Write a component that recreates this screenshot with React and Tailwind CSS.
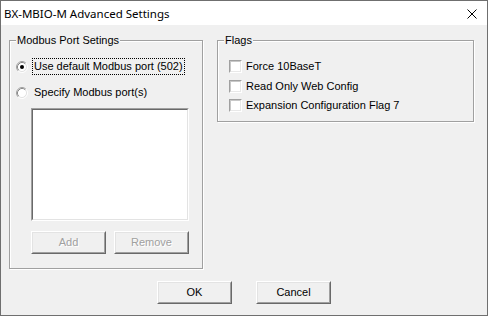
import React from "react";

function Radio({ checked }) {
  return (
    <svg width="12" height="12" viewBox="0 0 12 12" className="shrink-0">
      <circle cx="6" cy="6" r="4.5" fill="#ffffff" />
      <path d="M2.11 9.89 A5.5 5.5 0 0 1 9.89 2.11" stroke="#a0a0a0" fill="none" />
      <path d="M9.89 2.11 A5.5 5.5 0 0 1 2.11 9.89" stroke="#ffffff" fill="none" />
      <path d="M2.82 9.18 A4.5 4.5 0 0 1 9.18 2.82" stroke="#8a8a8a" fill="none" />
      <path d="M9.18 2.82 A4.5 4.5 0 0 1 2.82 9.18" stroke="#e3e3e3" fill="none" />
      {checked && <circle cx="6" cy="6" r="2" fill="#000000" />}
    </svg>
  );
}

function Check() {
  return (
    <div className="w-[13px] h-[13px] shrink-0 border border-t-[#a0a0a0] border-l-[#a0a0a0] border-r-white border-b-white">
      <div className="w-full h-full bg-white border border-t-[#c8c8c8] border-l-[#c8c8c8] border-r-[#e8e8e8] border-b-[#e8e8e8]" />
    </div>
  );
}

function Btn({ children, disabled }) {
  return (
    <div className="h-[23px] w-[75px] shrink-0 border border-t-white border-l-white border-r-[#696969] border-b-[#696969]">
      <div
        className={
          disabled
            ? "h-full w-full flex items-center justify-center bg-[#f0f0f0] border border-t-[#e3e3e3] border-l-[#e3e3e3] border-r-[#a0a0a0] border-b-[#a0a0a0] text-[#a0a0a0] [text-shadow:1px_1px_0_#ffffff]"
            : "h-full w-full flex items-center justify-center bg-[#f0f0f0] border border-t-[#e3e3e3] border-l-[#e3e3e3] border-r-[#a0a0a0] border-b-[#a0a0a0] text-black"
        }
      >
        {children}
      </div>
    </div>
  );
}

function Group({ label, className, children }) {
  return (
    <div
      className={
        "relative shrink-0 border border-[#a0a0a0] shadow-[inset_1px_1px_0_#ffffff,1px_1px_0_#ffffff] " +
        className
      }
    >
      <span className="absolute left-[6px] top-[-7px] px-[1px] bg-[#f0f0f0] leading-[13px]">
        {label}
      </span>
      {children}
    </div>
  );
}

export default function App() {
  return (
    <div className="w-[488px] h-[316px] border border-[#6f6f6f] flex flex-col bg-[#f0f0f0] font-['Liberation_Sans',Arial,sans-serif] text-[11px] text-black overflow-hidden">
      <div className="h-[24px] shrink-0 bg-white flex items-center justify-between pl-[3px] pr-[10px]">
        <span className="font-['Noto_Sans',sans-serif] text-[11.5px] leading-[16px] pt-[2px]">
          BX-MBIO-M Advanced Settings
        </span>
        <svg width="10" height="10" viewBox="0 0 10 10" className="mt-[2px]">
          <path d="M0.5 0.5 L9.5 9.5 M9.5 0.5 L0.5 9.5" stroke="#000000" strokeWidth="1" fill="none" />
        </svg>
      </div>
      <div className="flex-1 flex flex-col pt-[15px] pl-[8px]">
        <div className="flex gap-[14px] items-start">
          <Group label="Modbus Port Setings" className="w-[194px] h-[229px]">
            <div className="flex flex-col">
              <div className="flex items-center mt-[17px] ml-[6px] gap-[4px]">
                <Radio checked />
                <span className="border border-dotted border-black px-[1px] leading-[15px]">
                  Use default Modbus port (502)
                </span>
              </div>
              <div className="flex items-center mt-[9px] ml-[6px] gap-[4px]">
                <Radio />
                <span className="border border-transparent px-[1px] leading-[15px]">
                  Specify Modbus port(s)
                </span>
              </div>
              <div className="ml-[21px] mt-[7px] w-[158px] h-[113px] border border-t-[#a0a0a0] border-l-[#a0a0a0] border-r-white border-b-white">
                <div className="w-full h-full bg-white border border-t-[#696969] border-l-[#696969] border-r-[#e3e3e3] border-b-[#e3e3e3]" />
              </div>
              <div className="flex ml-[21px] mt-[10px] gap-[8px]">
                <Btn disabled>Add</Btn>
                <Btn disabled>Remove</Btn>
              </div>
            </div>
          </Group>
          <Group label="Flags" className="w-[257px] h-[82px]">
            <div className="flex flex-col ml-[11px]">
              <div className="flex items-center gap-[4px] mt-[19px] h-[13px]">
                <Check />
                <span>Force 10BaseT</span>
              </div>
              <div className="flex items-center gap-[4px] mt-[7px] h-[13px]">
                <Check />
                <span>Read Only Web Config</span>
              </div>
              <div className="flex items-center gap-[4px] mt-[6px] h-[13px]">
                <Check />
                <span>Expansion Configuration Flag 7</span>
              </div>
            </div>
          </Group>
        </div>
        <div className="flex justify-center gap-[24px] mt-[12px] pr-[8px]">
          <Btn>OK</Btn>
          <Btn>Cancel</Btn>
        </div>
      </div>
    </div>
  );
}
